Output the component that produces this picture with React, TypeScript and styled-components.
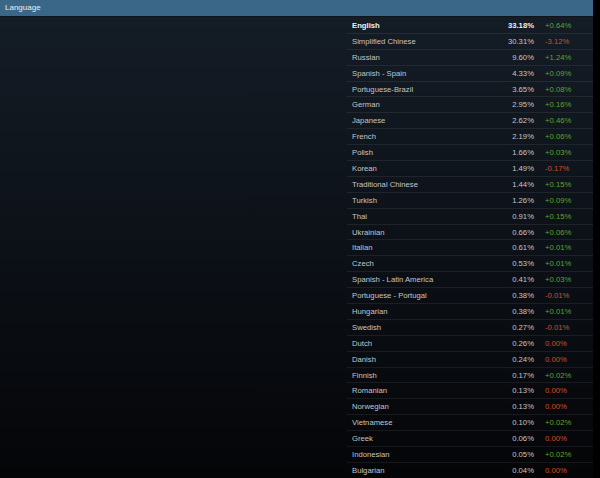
import styled, { createGlobalStyle } from "styled-components"

const GlobalStyle = createGlobalStyle`
    html, body {
        margin: 0;
        padding: 0;
        background: #000;
        font-family: "Liberation Sans", Arial, sans-serif;
    }
`

type Lang = { name: string; pct: string; change: string }

const languages: Lang[] = [
    { name: "English", pct: "33.18%", change: "+0.64%" },
    { name: "Simplified Chinese", pct: "30.31%", change: "-3.12%" },
    { name: "Russian", pct: "9.60%", change: "+1.24%" },
    { name: "Spanish - Spain", pct: "4.33%", change: "+0.09%" },
    { name: "Portuguese-Brazil", pct: "3.65%", change: "+0.08%" },
    { name: "German", pct: "2.95%", change: "+0.16%" },
    { name: "Japanese", pct: "2.62%", change: "+0.46%" },
    { name: "French", pct: "2.19%", change: "+0.06%" },
    { name: "Polish", pct: "1.66%", change: "+0.03%" },
    { name: "Korean", pct: "1.49%", change: "-0.17%" },
    { name: "Traditional Chinese", pct: "1.44%", change: "+0.15%" },
    { name: "Turkish", pct: "1.26%", change: "+0.09%" },
    { name: "Thai", pct: "0.91%", change: "+0.15%" },
    { name: "Ukrainian", pct: "0.66%", change: "+0.06%" },
    { name: "Italian", pct: "0.61%", change: "+0.01%" },
    { name: "Czech", pct: "0.53%", change: "+0.01%" },
    { name: "Spanish - Latin America", pct: "0.41%", change: "+0.03%" },
    { name: "Portuguese - Portugal", pct: "0.38%", change: "-0.01%" },
    { name: "Hungarian", pct: "0.38%", change: "+0.01%" },
    { name: "Swedish", pct: "0.27%", change: "-0.01%" },
    { name: "Dutch", pct: "0.26%", change: "0.00%" },
    { name: "Danish", pct: "0.24%", change: "0.00%" },
    { name: "Finnish", pct: "0.17%", change: "+0.02%" },
    { name: "Romanian", pct: "0.13%", change: "0.00%" },
    { name: "Norwegian", pct: "0.13%", change: "0.00%" },
    { name: "Vietnamese", pct: "0.10%", change: "+0.02%" },
    { name: "Greek", pct: "0.06%", change: "0.00%" },
    { name: "Indonesian", pct: "0.05%", change: "+0.02%" },
    { name: "Bulgarian", pct: "0.04%", change: "0.00%" },
]

function App() {
    return (
        <>
            <GlobalStyle />
            <Panel>
                <Header>Language</Header>
                <Body>
                    <Table>
                        {languages.map((l, i) => (
                            <Row key={l.name} $top={i === 0}>
                                <Name>{l.name}</Name>
                                <Pct>{l.pct}</Pct>
                                <Change $up={l.change.startsWith("+")}>{l.change}</Change>
                            </Row>
                        ))}
                    </Table>
                </Body>
            </Panel>
        </>
    )
}

export default App

const Panel = styled.section`
    width: 593px;
    height: 478px;
    display: flex;
    flex-direction: column;
    overflow: hidden;
`

const Header = styled.div`
    height: 16px;
    flex-shrink: 0;
    background: #3a6787;
    color: #e8eef3;
    font-size: 8px;
    line-height: 16px;
    padding-left: 5px;
    border-bottom: 1px solid #0e141a;
`

const Body = styled.div`
    flex: 1;
    display: flex;
    justify-content: flex-end;
    padding-top: 1px;
    background: linear-gradient(180deg, #141c25 0%, #0d1219 45%, #040507 100%);
`

const Table = styled.div`
    width: 246px;
    display: flex;
    flex-direction: column;
`

const Row = styled.div<{ $top: boolean }>`
    height: 15.9px;
    box-sizing: border-box;
    display: grid;
    grid-template-columns: 1fr 56px 59px;
    align-items: center;
    font-size: 7.7px;
    color: ${p => (p.$top ? "#f2f2f2" : "#c4c5c7")};
    font-weight: ${p => (p.$top ? "bold" : "normal")};
    border-bottom: 1px solid rgba(255, 255, 255, 0.07);
`

const Name = styled.span`
    padding-left: 5px;
    white-space: nowrap;
`

const Pct = styled.span`
    text-align: right;
`

const Change = styled.span<{ $up: boolean }>`
    padding-left: 11px;
    font-weight: normal;
    color: ${p => (p.$up ? "#5fa32c" : "#cf4f2d")};
`
